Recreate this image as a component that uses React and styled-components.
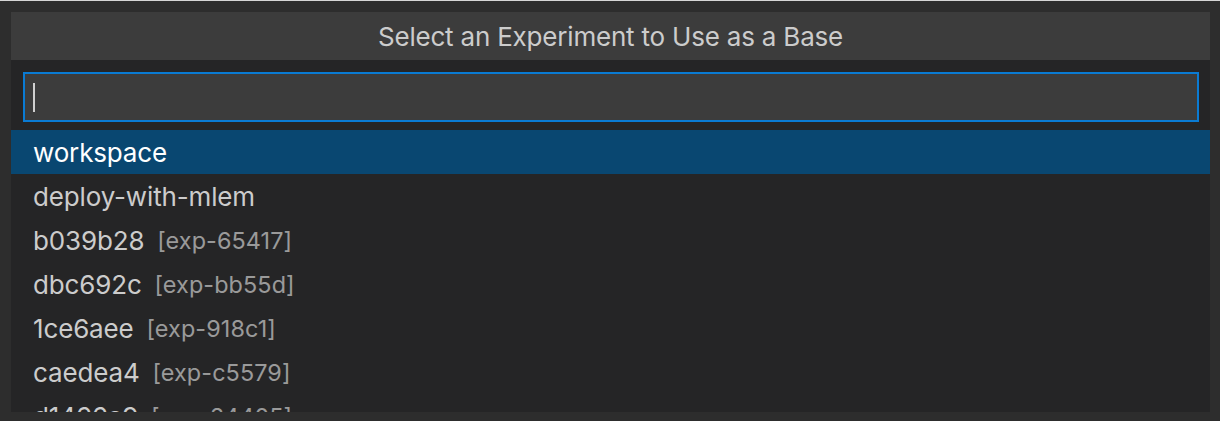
import React from "react";
import styled, { createGlobalStyle } from "styled-components";

const Global = createGlobalStyle`
  html, body { margin: 0; padding: 0; background: #2d2d2d; }
  body { font-family: Inter, "Open Sans", "Liberation Sans", sans-serif; -webkit-font-smoothing: antialiased; }
`;

const Screen = styled.div`
  height: 421px;
  box-sizing: border-box;
  border-top: 1px solid #d6d6d6;
  padding: 11px 10px 9px 11px;
  background: #2d2d2d;
  overflow: hidden;
`;

const Panel = styled.div`
  height: 400px;
  display: flex;
  flex-direction: column;
  background: #252526;
  overflow: hidden;
`;

const Title = styled.div`
  height: 48px;
  flex: none;
  display: flex;
  align-items: center;
  justify-content: center;
  background: #3c3c3c;
  color: #cccccc;
  font-size: 26px;
  letter-spacing: -0.2px;
`;

const InputWrap = styled.div`
  padding: 12px 11px 8px 12px;
  flex: none;
`;

const InputBox = styled.div`
  height: 50px;
  box-sizing: border-box;
  border: 2px solid #0a7bd3;
  background: #3c3c3c;
  display: flex;
  align-items: center;
  padding-left: 8px;
`;

const Caret = styled.span`
  width: 2px;
  height: 29px;
  background: #d0d0d0;
`;

const List = styled.div`
  display: flex;
  flex-direction: column;
`;

const Row = styled.div`
  height: 44px;
  flex: none;
  display: flex;
  align-items: center;
  padding-left: 22px;
  font-size: 26px;
  letter-spacing: -0.15px;
  color: ${(p) => (p.$selected ? "#ffffff" : "#cccccc")};
  background: ${(p) => (p.$selected ? "#094771" : "transparent")};
  white-space: nowrap;
`;

const Desc = styled.span`
  font-size: 0.9em;
  margin-left: 0.55em;
  letter-spacing: 0.1px;
  opacity: 0.7;
`;

const items = [
  { label: "workspace" },
  { label: "deploy-with-mlem" },
  { label: "b039b28", desc: "[exp-65417]" },
  { label: "dbc692c", desc: "[exp-bb55d]" },
  { label: "1ce6aee", desc: "[exp-918c1]" },
  { label: "caedea4", desc: "[exp-c5579]" },
  { label: "d1466a9", desc: "[exp-24405]" },
];

export default function App() {
  return (
    <>
      <Global />
      <Screen>
        <Panel>
          <Title>Select an Experiment to Use as a Base</Title>
          <InputWrap>
            <InputBox>
              <Caret />
            </InputBox>
          </InputWrap>
          <List>
            {items.map((it, i) => (
              <Row key={i} $selected={i === 0}>
                {it.label}
                {it.desc && <Desc>{it.desc}</Desc>}
              </Row>
            ))}
          </List>
        </Panel>
      </Screen>
    </>
  );
}
